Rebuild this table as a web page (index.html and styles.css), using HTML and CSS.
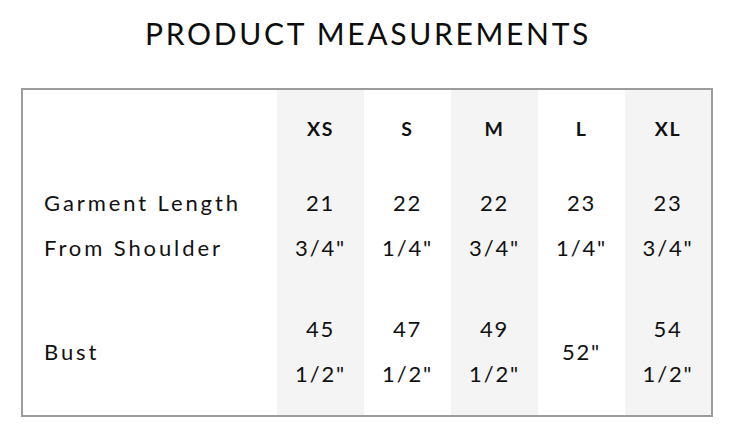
FILE: index.html
```html
<!DOCTYPE html>
<html lang="en">
<head>
<meta charset="utf-8">
<title>Product Measurements</title>
<link rel="stylesheet" href="styles.css">
</head>
<body>
<main class="page">
  <h1 class="title">PRODUCT MEASUREMENTS</h1>
  <table class="sizes">
    <colgroup>
      <col class="c-label">
      <col class="c-size shade">
      <col class="c-size">
      <col class="c-size shade">
      <col class="c-size">
      <col class="c-last shade">
    </colgroup>
    <thead>
      <tr class="row-head">
        <th></th><th>XS</th><th>S</th><th>M</th><th>L</th><th>XL</th>
      </tr>
    </thead>
    <tbody>
      <tr class="row-length">
        <td class="label">Garment Length<br>From Shoulder</td>
        <td>21<br>3/4"</td>
        <td>22<br>1/4"</td>
        <td>22<br>3/4"</td>
        <td>23<br>1/4"</td>
        <td>23<br>3/4"</td>
      </tr>
      <tr class="row-bust">
        <td class="label">Bust</td>
        <td>45<br>1/2"</td>
        <td>47<br>1/2"</td>
        <td>49<br>1/2"</td>
        <td>52"</td>
        <td>54<br>1/2"</td>
      </tr>
    </tbody>
  </table>
</main>
</body>
</html>
```
FILE: styles.css
```css
html, body {
  margin: 0;
  padding: 0;
  background: #ffffff;
}

body {
  font-family: Lato, "Noto Sans", sans-serif;
  color: #111111;
}

.page {
  display: flex;
  flex-direction: column;
  align-items: center;
  padding-top: 16px;
}

.title {
  margin: 0 0 37px 4px;
  font-size: 30px;
  line-height: 35px;
  font-weight: 400;
  letter-spacing: 2.7px;
  color: #0d0d0d;
}

.sizes {
  width: 692px;
  margin-left: 2px;
  border: 2px solid #9c9c9c;
  border-collapse: separate;
  border-spacing: 0;
  table-layout: fixed;
}

.c-label { width: 254px; }
.c-size { width: 87px; }
.c-last { width: 86px; }
.shade { background: #f4f4f4; }

.sizes th,
.sizes td {
  padding: 0;
  text-align: center;
  vertical-align: middle;
  line-height: 45px;
}

.sizes th {
  font-size: 19.5px;
  font-weight: 700;
  letter-spacing: 1.6px;
}

.sizes td {
  font-size: 22px;
  font-weight: 400;
  letter-spacing: 1.8px;
}

.sizes td.label {
  text-align: left;
  padding-left: 21px;
  letter-spacing: 2.9px;
}

.row-head th { padding-top: 16px; padding-bottom: 14px; }
.row-length td { padding-top: 15px; padding-bottom: 18px; }
.row-bust td { padding-top: 18px; padding-bottom: 19px; }
```
